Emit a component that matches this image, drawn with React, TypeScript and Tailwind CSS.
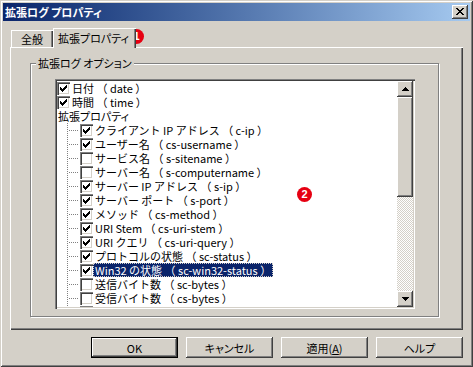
import React from "react";

type Row = {
  label: string;
  child?: boolean;
  header?: boolean;
  checked?: boolean;
  selected?: boolean;
};

const rows: Row[] = [
  { label: "日付 （ date ）", checked: true },
  { label: "時間 （ time ）", checked: true },
  { label: "拡張プロパティ", header: true },
  { label: "クライアント IP アドレス （ c-ip ）", child: true, checked: true },
  { label: "ユーザー名 （ cs-username ）", child: true, checked: true },
  { label: "サービス名 （ s-sitename ）", child: true },
  { label: "サーバー名 （ s-computername ）", child: true },
  { label: "サーバー IP アドレス （ s-ip ）", child: true, checked: true },
  { label: "サーバー ポート （ s-port ）", child: true, checked: true },
  { label: "メソッド （ cs-method ）", child: true, checked: true },
  { label: "URI Stem （ cs-uri-stem ）", child: true, checked: true },
  { label: "URI クエリ （ cs-uri-query ）", child: true, checked: true },
  { label: "プロトコルの状態 （ sc-status ）", child: true, checked: true },
  { label: "Win32 の状態 （ sc-win32-status ）", child: true, checked: true, selected: true },
  { label: "送信バイト数 （ sc-bytes ）", child: true },
  { label: "受信バイト数 （ cs-bytes ）", child: true },
  { label: "所要時間 （ time-taken ）", child: true },
];

const raised =
  "bg-[#d4d0c8] shadow-[inset_-1px_-1px_#404040,inset_1px_1px_#fff,inset_-2px_-2px_#808080,inset_2px_2px_#d4d0c8]";

function CheckBox({ checked }: { checked?: boolean }) {
  return (
    <span className="relative block h-[13px] w-[13px] shrink-0 bg-white shadow-[inset_1px_1px_#808080,inset_2px_2px_#404040,inset_-1px_-1px_#fff,inset_-2px_-2px_#d4d0c8]">
      {checked && (
        <svg width="13" height="13" viewBox="0 0 13 13" className="absolute left-0 top-0" shapeRendering="crispEdges">
          <path
            fill="#000"
            d="M3 5h1v3H3z M4 6h1v3H4z M5 7h1v3H5z M6 6h1v3H6z M7 5h1v3H7z M8 4h1v3H8z M9 3h1v3H9z"
          />
        </svg>
      )}
    </span>
  );
}

function TreeLines() {
  return (
    <svg width="23" height="14" viewBox="0 0 23 14" className="shrink-0" shapeRendering="crispEdges">
      {[0, 2, 4, 6, 8, 10, 12].map((y) => (
        <rect key={"v" + y} x="10" y={y} width="1" height="1" fill="#808080" />
      ))}
      {[12, 14, 16, 18, 20].map((x) => (
        <rect key={"h" + x} x={x} y="7" width="1" height="1" fill="#808080" />
      ))}
    </svg>
  );
}

function Arrow({ down }: { down?: boolean }) {
  return (
    <svg width="7" height="4" viewBox="0 0 7 4" shapeRendering="crispEdges" className={down ? "rotate-180" : ""}>
      <path fill="#000" d="M3 0h1v1H3z M2 1h3v1H2z M1 2h5v1H1z M0 3h7v1H0z" />
    </svg>
  );
}

function Marker({ n, className }: { n: string; className: string }) {
  return (
    <span
      className={
        "absolute flex h-[15px] w-[15px] items-center justify-center rounded-full bg-[#e60012] font-['Liberation_Sans',sans-serif] text-[11px] font-bold leading-none text-white " +
        className
      }
    >
      {n}
    </span>
  );
}

export default function App() {
  return (
    <div className="relative h-[367px] w-[473px] bg-[#d4d0c8] p-[3px] font-['Noto_Sans_CJK_JP',sans-serif] text-[11px] leading-[14px] text-black shadow-[inset_1px_1px_#d4d0c8,inset_-1px_-1px_#404040,inset_2px_2px_#fff,inset_-2px_-2px_#808080]">
      {/* title bar */}
      <div className="flex h-[18px] items-center justify-between bg-linear-to-r from-[#0a246a] to-[#a6caf0] pl-[2px]">
        <span className="font-bold text-white [font-feature-settings:'palt']">拡張ログ プロパティ</span>
        <button className={"mr-[2px] flex h-[14px] w-[16px] items-start justify-start pl-[4px] pt-[3px] " + raised}>
          <svg width="8" height="7" viewBox="0 0 8 7" shapeRendering="crispEdges">
            <path
              fill="#000"
              d="M0 0h2v1H0z M6 0h2v1H6z M1 1h2v1H1z M5 1h2v1H5z M2 2h4v1H2z M3 3h2v1H3z M2 4h4v1H2z M1 5h2v1H1z M5 5h2v1H5z M0 6h2v1H0z M6 6h2v1H6z"
            />
          </svg>
        </button>
      </div>

      <div className="flex flex-col px-[7px] pt-[7px]">
        {/* tabs */}
        <div className="flex h-[19px] items-end pl-[1px] [font-feature-settings:'palt']">
          <div className="flex h-[17px] w-[42px] items-center justify-center bg-[#d4d0c8] pt-[1px] shadow-[inset_1px_1px_#fff,inset_-1px_0_#404040,inset_-2px_0_#808080]">
            全般
          </div>
          <div className="relative z-10 -mb-px flex h-[20px] w-[83px] items-center justify-center bg-[#d4d0c8] pb-[1px] pr-[2px] shadow-[inset_1px_1px_#fff,inset_-1px_0_#404040,inset_-2px_0_#808080]">
            拡張プロパティ
          </div>
        </div>

        {/* tab panel */}
        <div className="h-[283px] bg-[#d4d0c8] pl-[20px] pt-[16px] shadow-[inset_1px_1px_#fff,inset_-1px_-1px_#404040,inset_-2px_-2px_#808080]">
          <div className="relative h-[254px] w-[409px] border border-[#808080] pl-[24px] pt-[15px] shadow-[1px_1px_0_#fff,inset_1px_1px_0_#fff]">
            <span className="absolute -top-[8px] left-[5px] bg-[#d4d0c8] px-[2px] [font-feature-settings:'palt']">
              拡張ログ オプション
            </span>

            {/* list box */}
            <div className="flex h-[230px] w-[360px] bg-white p-[2px] shadow-[inset_1px_1px_#808080,inset_2px_2px_#404040,inset_-1px_-1px_#fff,inset_-2px_-2px_#d4d0c8]">
              <div className="flex-1 overflow-hidden">
                {rows.map((r) => (
                  <div key={r.label} className="flex h-[14px] items-center whitespace-nowrap">
                    {r.child && <TreeLines />}
                    {!r.header && <CheckBox checked={r.checked} />}
                    <span
                      className={
                        r.selected
                          ? "h-[14px] bg-[#0a246a] px-[2px] text-white outline-1 -outline-offset-1 outline-dotted outline-[#d4d0c8]"
                          : r.header
                            ? "px-[1px] [font-feature-settings:'palt']"
                            : "px-[2px]"
                      }
                    >
                      {r.label}
                    </span>
                  </div>
                ))}
              </div>

              {/* scroll bar */}
              <div className="flex w-[16px] flex-col">
                <div className={"flex h-[16px] items-center justify-center " + raised}>
                  <Arrow />
                </div>
                <div className={"h-[100px] " + raised} />
                <div className="flex-1 bg-[repeating-conic-gradient(#fff_0%_25%,#d4d0c8_0%_50%)] bg-[length:2px_2px]" />
                <div className={"flex h-[16px] items-center justify-center " + raised}>
                  <Arrow down />
                </div>
              </div>
            </div>
          </div>
        </div>

        {/* buttons */}
        <div className="mt-[7px] flex justify-end gap-[8px] [font-feature-settings:'palt']">
          <button className="flex h-[21px] w-[87px] items-center justify-center border border-black bg-[#d4d0c8] shadow-[inset_-1px_-1px_#404040,inset_1px_1px_#fff,inset_-2px_-2px_#808080]">
            OK
          </button>
          <button className={"flex h-[21px] w-[87px] items-center justify-center " + raised}>キャンセル</button>
          <button className={"flex h-[21px] w-[87px] items-center justify-center " + raised}>
            適用(<span className="underline">A</span>)
          </button>
          <button className={"flex h-[21px] w-[87px] items-center justify-center " + raised}>ヘルプ</button>
        </div>
      </div>

      <Marker n="1" className="left-[129px] top-[29px]" />
      <Marker n="2" className="left-[297px] top-[187px]" />
    </div>
  );
}
